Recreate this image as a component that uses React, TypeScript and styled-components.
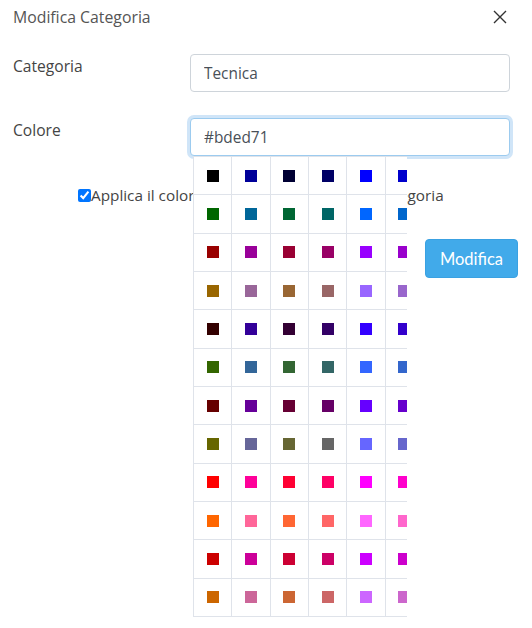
import { useState } from "react";
import styled, { createGlobalStyle } from "styled-components";

const GlobalStyle = createGlobalStyle`
    body {
        margin: 0;
        background: #fff;
        font-family: "Open Sans", "Noto Sans", sans-serif;
        color: #444;
    }
`;

// palette: red/green pairs per row, blue per column
const ROW_RG = ["0000", "0066", "9900", "9966", "3300", "3366", "6600", "6666", "ff00", "ff66", "cc00", "cc66"];
const COL_B = ["00", "99", "33", "66", "ff", "cc"];

export default function App() {
    const [color, setColor] = useState("#bded71");
    const [applyAll, setApplyAll] = useState(true);

    return (
        <Modal>
            <GlobalStyle />
            <Header>
                <Title>Modifica Categoria</Title>
                <CloseButton aria-label="Chiudi">
                    <svg width="14" height="14" viewBox="0 0 14 14">
                        <path d="M1 1L13 13M13 1L1 13" stroke="#333" strokeWidth="1.4" />
                    </svg>
                </CloseButton>
            </Header>
            <Body>
                <FormRow>
                    <Label>Categoria</Label>
                    <Input defaultValue="Tecnica" />
                </FormRow>
                <FormRow>
                    <Label>Colore</Label>
                    <ColorField>
                        <Input $focused value={color} onChange={(e) => setColor(e.target.value)} />
                        <Dropdown>
                            <Swatches>
                                {ROW_RG.map((rg) =>
                                    COL_B.map((b) => {
                                        const hex = `#${rg}${b}`;
                                        return (
                                            <Cell key={hex} onClick={() => setColor(hex)}>
                                                <Swatch $color={hex} />
                                            </Cell>
                                        );
                                    })
                                )}
                            </Swatches>
                        </Dropdown>
                    </ColorField>
                </FormRow>
                <CheckRow>
                    <input
                        type="checkbox"
                        checked={applyAll}
                        onChange={() => setApplyAll(!applyAll)}
                    />
                    <span>Applica il colore a tutti gli elementi della categoria</span>
                </CheckRow>
                <Actions>
                    <PrimaryButton>Modifica</PrimaryButton>
                </Actions>
            </Body>
        </Modal>
    );
}

const Modal = styled.div`
    width: 532px;
    height: 628px;
    box-sizing: border-box;
    overflow: hidden;
`;

const Header = styled.div`
    display: flex;
    align-items: center;
    justify-content: space-between;
    padding: 4px 25px 0 13px;
    height: 26px;
`;

const Title = styled.div`
    font-size: 15.8px;
    color: #555;
`;

const CloseButton = styled.button`
    background: none;
    border: none;
    padding: 0;
    width: 14px;
    height: 14px;
    display: flex;
    cursor: pointer;
`;

const Body = styled.div`
    padding: 24px 23px 0 13px;
    display: flex;
    flex-direction: column;
`;

const FormRow = styled.div`
    display: grid;
    grid-template-columns: 177px 320px;
    align-items: start;
    margin-bottom: 26px;
`;

const Label = styled.label`
    font-size: 15.6px;
    color: #444;
    padding-top: 1px;
`;

const ColorField = styled.div`
    position: relative;
`;

const Input = styled.input<{ $focused?: boolean }>`
    box-sizing: border-box;
    width: 320px;
    height: 38px;
    padding: 0 13px;
    font-family: "Open Sans", "Noto Sans", sans-serif;
    font-size: 15.4px;
    color: #495057;
    border-radius: 4px;
    border: 1px solid ${({ $focused }) => ($focused ? "#9ccbef" : "#ced4da")};
    box-shadow: ${({ $focused }) => ($focused ? "0 0 0 3px rgba(120, 180, 235, 0.35)" : "none")};
    outline: none;
`;

const Dropdown = styled.div`
    position: absolute;
    top: 100%;
    left: 3px;
    width: 214px;
    overflow: hidden;
    background: #fff;
    z-index: 2;
`;

const Swatches = styled.div`
    display: grid;
    grid-template-columns: repeat(6, 38.33px);
    grid-auto-rows: 38.33px;
    width: 230px;
    border-top: 1px solid #dfe3ea;
    border-left: 1px solid #dfe3ea;
`;

const Cell = styled.div`
    box-sizing: border-box;
    display: flex;
    align-items: center;
    justify-content: center;
    border-right: 1px solid #dfe3ea;
    border-bottom: 1px solid #dfe3ea;
    cursor: pointer;
`;

const Swatch = styled.span<{ $color: string }>`
    width: 12px;
    height: 12px;
    background: ${({ $color }) => $color};
`;

const CheckRow = styled.label`
    display: flex;
    align-items: center;
    margin-left: 65px;
    margin-top: 3px;
    font-size: 15.3px;
    color: #444;
    white-space: nowrap;

    input {
        width: 13px;
        height: 13px;
        margin: 0;
    }
`;

const Actions = styled.div`
    display: flex;
    justify-content: flex-end;
    margin-top: 34px;
`;

const PrimaryButton = styled.button`
    width: 93px;
    height: 39px;
    margin-right: -9px;
    border: 1px solid #3aa1e2;
    border-radius: 4px;
    background: #41aaea;
    color: #fff;
    font-family: Lato, "Open Sans", sans-serif;
    font-size: 16.5px;
    cursor: pointer;
`;
